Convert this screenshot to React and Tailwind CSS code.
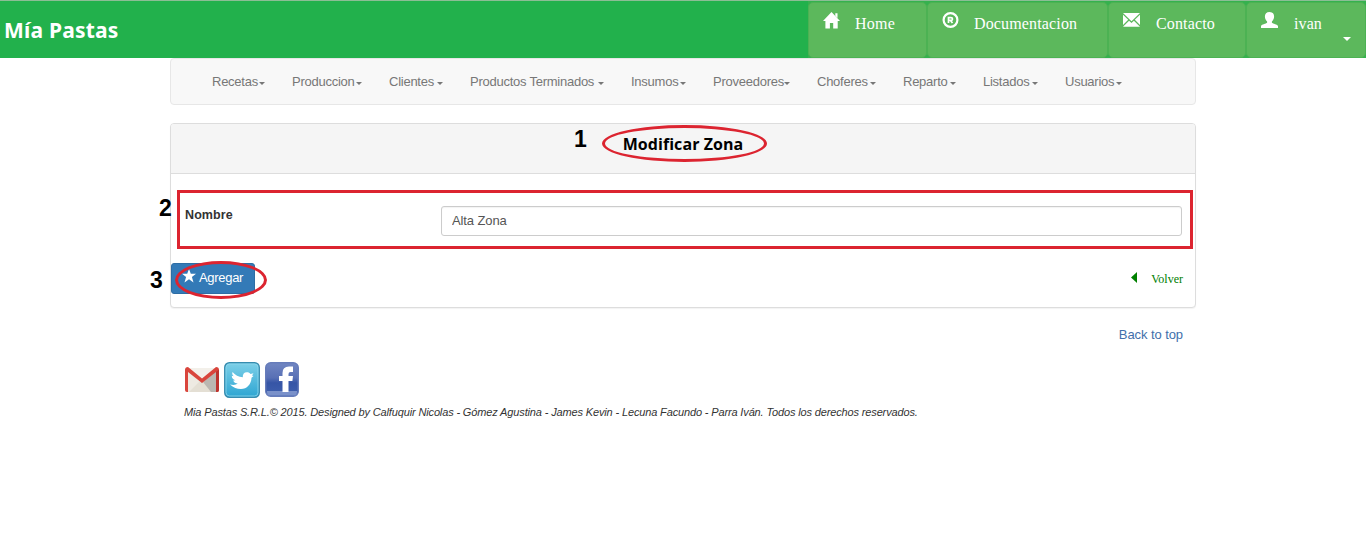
const menu = [
  ['Recetas', 'w-[80px]', 'w-[47px]'],
  ['Produccion', 'w-[97px]', 'w-[64px]'],
  ['Clientes', 'w-[81px]', 'w-[48px]'],
  ['Productos Terminados', 'w-[161px]', 'w-[128px]'],
  ['Insumos', 'w-[82px]', 'w-[49px]'],
  ['Proveedores', 'w-[104px]', 'w-[71px]'],
  ['Choferes', 'w-[86px]', 'w-[53px]'],
  ['Reparto', 'w-[80px]', 'w-[47px]'],
  ['Listados', 'w-[82px]', 'w-[49px]'],
  ['Usuarios', 'w-[80px]', 'w-[51px]'],
];

function Caret({ className }) {
  return (
    <svg className={`shrink-0 ${className}`} viewBox="0 0 8 4" preserveAspectRatio="none">
      <path d="M0 0h8L4 4z" fill="currentColor" />
    </svg>
  );
}

const HomeIcon = () => (
  <svg className="h-[17px] w-[17px]" viewBox="0 0 17 17" fill="#fff">
    <path d="M8.500 0 17 9h-2.300v7.500H10.200V11H6.900v5.500H2.400V9H0L8.500 0ZM12.300 1.300h2.200v4.800l-2.200-2.300z" />
  </svg>
);
const RegisteredIcon = () => (
  <svg className="h-4 w-[17px]" viewBox="0 0 17 16" fill="none" stroke="#fff">
    <circle cx="8.500" cy="8" r="6.900" strokeWidth="2.200" />
    <path d="M6.500 11V5.600h2.400q1.600 0 1.600 1.400T8.900 8.400H6.500M8.500 8.400l2 2.600" strokeWidth="1.700" />
  </svg>
);
const MailIcon = () => (
  <svg className="h-4 w-[17px]" viewBox="0 0 17 16" fill="#fff">
    <path d="M0 1h17L8.500 9.200zM0 2.700 5.200 7.800 0 13zM17 2.700 11.800 7.800 17 13zM6.100 8.800l2.400 2.300 2.400-2.300 6.100 5.900H0z" />
  </svg>
);
const UserIcon = () => (
  <svg className="h-4 w-[17px]" viewBox="0 0 17 16" fill="#fff">
    <path d="M8.500 0c3 0 4.600 1.800 4.600 4.600 0 2-.9 3.800-2.200 4.900v1.200c.8 1 5.800 1.700 6.100 3.200V16H0v-2.100c.3-1.500 5.300-2.200 6.100-3.200V9.500C4.800 8.400 3.900 6.600 3.900 4.600 3.900 1.800 5.500 0 8.500 0Z" />
  </svg>
);

function TopButton({ icon, label, width, labelClass, caret }) {
  return (
    <a className={`flex h-[56px] shrink-0 items-start rounded-[5px] border border-[#4cb253] bg-[#5cb85c] pl-[14px] pt-[9px] text-white ${width}`}>
      {icon}
      <span className={`mt-[2px] font-['Liberation_Serif',serif] text-[16px] leading-[20px] ${labelClass}`}>{label}</span>
      {caret && <Caret className="ml-[21px] mt-[25px] h-[4px] w-[8px]" />}
    </a>
  );
}

function Gmail() {
  return (
    <svg width="36" height="36" viewBox="0 0 36 36">
      <path d="M2 6h32v24H2z" fill="#eeeae2" />
      <path d="M5 30 18 17l14 13z" fill="#e4dfd4" />
      <path d="m19 20 8 10h5V8z" fill="#bab7b1" />
      <path d="M4 6h28L18 18z" fill="#f3f0ea" />
      <path d="M1 8q0-3 3-3l14 11.500L32 5q3 0 3 3v20q0 2-2 2h-1V10L18 21 4 10v20H3q-2 0-2-2z" fill="#d9453c" />
      <path d="m32 10 3-2.500V28q0 2-2 2h-1z" fill="#bd332e" />
    </svg>
  );
}
function Twitter() {
  return (
    <svg width="36" height="36" viewBox="0 0 36 36">
      <defs><linearGradient id="tw" x2="0" y2="1"><stop stopColor="#7dd0e8" /><stop offset="1" stopColor="#2da5d2" /></linearGradient></defs>
      <rect x=".8" y=".8" width="34.400" height="34.400" rx="4.500" fill="url(#tw)" stroke="#368caf" strokeWidth="1.500" />
      <rect x="2" y="2" width="32" height="32" rx="3.500" fill="none" stroke="#8ed8ee" strokeWidth=".8" />
      <path d="M8.500 10c2.500 3.200 6.200 4.900 10.300 5.300-.3-3.400 1.500-5.200 4.200-5.100 1.500 0 2.700.7 3.500 1.700l3-.7-1.500 2.400 1.500.4-2 1.800c-.2 6.700-4.600 11.200-10.600 11.200-4 0-7.500-1.400-10.900-4.500 3.500.9 6 .4 7.800-1-2.400-.1-3.900-1.300-4.600-3.100l2.200-.2c-2.500-.8-3.700-2.400-3.600-4.500l1.900.6c-1.400-1.200-1.800-2.600-1.200-4.300Z" fill="#fff" />
    </svg>
  );
}
function Facebook() {
  return (
    <svg className="ml-px" width="34" height="35" viewBox="0 0 34 35">
      <defs><linearGradient id="fb" x2="0" y2="1"><stop stopColor="#7186c2" /><stop offset=".45" stopColor="#5870b5" /><stop offset=".6" stopColor="#3655a6" /><stop offset="1" stopColor="#4060ae" /></linearGradient></defs>
      <rect x=".7" y=".7" width="32.600" height="33.600" rx="5" fill="url(#fb)" stroke="#667cba" strokeWidth="1.400" />
      <path d="M2 29h30v1q0 3.500-3 3.500H5q-3 0-3-3.500z" fill="#7a91ca" />
      <path d="M17.500 30V19H14v-5h3.500v-3q0-6.500 6.500-6.500h4v5.500h-2.500q-2 0-2 2v2H28l-.6 5h-3.900v11z" fill="#fff" />
    </svg>
  );
}

export default function App() {
  return (
    <div className="relative h-[546px] w-[1366px] overflow-hidden bg-white font-['Liberation_Sans',sans-serif] text-[13px] text-[#333]">
      <header className="flex h-[58px] items-start justify-between border-t border-[#8cbd95] bg-[#22b14c]">
        <h1 className="ml-[4px] mt-[15px] whitespace-nowrap font-['Noto_Sans','Open_Sans',sans-serif] text-[21px] leading-[29px] font-bold tracking-[0.2px] text-white">Mía Pastas</h1>
        <nav className="flex h-[57px] bg-[#35b14e] pt-px">
          <TopButton icon={<HomeIcon />} label="Home" width="w-[119px]" labelClass="ml-[15px] tracking-[0.25px]" />
          <TopButton icon={<RegisteredIcon />} label="Documentacion" width="w-[181px]" labelClass="ml-[15px] tracking-[0.15px]" />
          <TopButton icon={<MailIcon />} label="Contacto" width="w-[138px]" labelClass="ml-[16px] tracking-[0.15px]" />
          <TopButton icon={<UserIcon />} label="ivan" width="w-[120px]" labelClass="ml-[16px] tracking-[0.1px]" caret />
        </nav>
      </header>

      <main className="ml-[170px] w-[1026px]">
        <nav className="flex h-[47px] rounded border border-[#e7e7e7] bg-[#f8f8f8] pl-[41px] pt-[14px] text-[#777]">
          {menu.map(([label, width, textWidth]) => (
            <a key={label} className={`flex h-[18px] shrink-0 items-center ${width}`}>
              <span className={`whitespace-nowrap tracking-[-0.25px] ${textWidth}`}>{label}</span>
              <Caret className="mt-[2px] h-[3px] w-[6px]" />
            </a>
          ))}
        </nav>

        <section className="mt-[18px] h-[185px] rounded border border-[#ddd] bg-white shadow-[0_1px_1px_rgba(0,0,0,0.05)]">
          <div className="flex h-[50px] justify-center rounded-t-[3px] border-b border-[#ddd] bg-[#f5f5f5] pt-[8px]">
            <h2 className="font-['Open_Sans',sans-serif] text-[16px] leading-[24px] font-bold tracking-[0.07px] text-black">Modificar Zona</h2>
          </div>
          <div className="flex h-[89px] pl-[14px] pt-[32px]">
            <label className="w-[256px] pt-px text-[12.500px] leading-[16px] font-bold tracking-[0.1px]">Nombre</label>
            <input className="h-[30px] w-[741px] rounded-[3px] border border-[#ccc] bg-white px-[10px] pb-[2px] text-[13px] tracking-[-0.1px] text-[#555] shadow-[inset_0_1px_1px_rgba(0,0,0,0.05)]" defaultValue="Alta Zona" />
          </div>
          <div className="flex items-start justify-between pr-[12px]">
            <button className="flex h-[31px] w-[84px] items-center rounded-[3px] border border-[#2e6da4] bg-[#337ab7] pb-[2px] pl-[10px] tracking-[-0.3px] text-white">
              <svg className="mr-[3px] mb-[3px] h-[14px] w-[14px]" viewBox="0 0 14 14" fill="#fff">
                <path d="m7 0 1.800 4.800H14L9.900 8.100 11.500 13.500 7 10.300l-4.500 3.200 1.600-5.400L0 4.800h5.200z" />
              </svg>
              Agregar
            </button>
            <a className="mt-[7px] flex items-start font-['Liberation_Serif',serif] text-[12px] leading-[18px] text-[#008000]">
              <svg className="mr-[14px] mt-[2px]" width="6" height="11" viewBox="0 0 6 11"><path d="M6 0v11L0 5.500z" fill="currentColor" /></svg>
              Volver
            </a>
          </div>
        </section>

        <footer className="pr-[13px] pl-[14px] pt-[17px]">
          <div className="flex justify-end leading-[20px] tracking-[-0.08px] text-[#426fab]"><a>Back to top</a></div>
          <div className="mt-[17px] flex h-[36px] gap-[4px]"><Gmail /><Twitter /><Facebook /></div>
          <p className="mt-[6px] whitespace-nowrap text-[11px] leading-[16px] tracking-[-0.141px] italic">Mia Pastas S.R.L.© 2015. Designed by Calfuquir Nicolas - Gómez Agustina - James Kevin - Lecuna Facundo - Parra Iván. Todos los derechos reservados.</p>
        </footer>
      </main>

      <div className="pointer-events-none absolute top-[125px] left-[602px] h-[37px] w-[165px] rounded-[50%] border-3 border-[#dc2430]" />
      <div className="pointer-events-none absolute top-[190px] left-[177px] h-[59px] w-[1016px] border-3 border-[#dc2430]" />
      <div className="pointer-events-none absolute top-[261px] left-[175px] h-[38px] w-[92px] rounded-[50%] border-3 border-[#dc2430]" />
      <span className="absolute top-[126px] left-[574px] text-[23px] leading-[26px] font-bold text-black">1</span>
      <span className="absolute top-[195px] left-[159px] text-[23px] leading-[26px] font-bold text-black">2</span>
      <span className="absolute top-[267px] left-[150px] text-[23px] leading-[26px] font-bold text-black">3</span>
    </div>
  );
}
